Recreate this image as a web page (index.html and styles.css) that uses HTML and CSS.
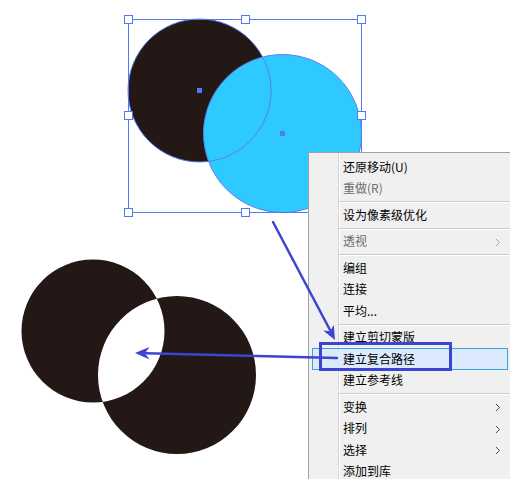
FILE: index.html
```html
<!DOCTYPE html>
<html lang="zh-CN">
<head>
<meta charset="utf-8">
<title>建立复合路径</title>
<link rel="stylesheet" href="styles.css">
</head>
<body>
<div class="stage">
  <svg class="canvas" width="510" height="479" viewBox="0 0 510 479">
    <!-- top: selected circles -->
    <circle cx="199.5" cy="90.5" r="71.5" fill="#231815"/>
    <circle cx="282.5" cy="133.5" r="79" fill="#2ec9ff"/>
    <circle cx="199.5" cy="90.5" r="71.5" fill="none" stroke="#5b7ef2" stroke-width="1"/>
    <circle cx="282.5" cy="133.5" r="79" fill="none" stroke="#5b7ef2" stroke-width="1"/>
    <rect x="128.5" y="19.5" width="233" height="193" fill="none" stroke="#4f7cf0" stroke-width="1"/>
    <g fill="#fff" stroke="#4f7cf0" stroke-width="1">
      <rect x="124.5" y="15.5" width="8" height="8"/>
      <rect x="241.5" y="15.5" width="8" height="8"/>
      <rect x="357.5" y="15.5" width="8" height="8"/>
      <rect x="124.5" y="111.5" width="8" height="8"/>
      <rect x="357.5" y="111.5" width="8" height="8"/>
      <rect x="124.5" y="208.5" width="8" height="8"/>
      <rect x="241.5" y="208.5" width="8" height="8"/>
      <rect x="357.5" y="208.5" width="8" height="8"/>
    </g>
    <rect x="197" y="88" width="5" height="5" fill="#4f7cf0"/>
    <rect x="280" y="131" width="5" height="5" fill="#4f7cf0"/>
    <!-- bottom: compound path result -->
    <path fill="#231815" fill-rule="evenodd"
      d="M21.5,331 a71.5,71.5 0 1,0 143,0 a71.5,71.5 0 1,0 -143,0 Z
         M98,375 a79,79 0 1,0 158,0 a79,79 0 1,0 -158,0 Z"/>
  </svg>

  <div class="menu">
    <div class="item">还原移动(U)</div>
    <div class="item disabled">重做(R)</div>
    <div class="sep"></div>
    <div class="item">设为像素级优化</div>
    <div class="sep"></div>
    <div class="item disabled has-sub">透视<svg class="chev" width="6" height="9" viewBox="0 0 6 9"><path d="M1 1 L4.5 4.5 L1 8" fill="none" stroke="currentColor" stroke-width="1"/></svg></div>
    <div class="sep"></div>
    <div class="item">编组</div>
    <div class="item">连接</div>
    <div class="item">平均...</div>
    <div class="sep"></div>
    <div class="item">建立剪切蒙版</div>
    <div class="item active">建立复合路径</div>
    <div class="item">建立参考线</div>
    <div class="sep"></div>
    <div class="item has-sub">变换<svg class="chev" width="6" height="9" viewBox="0 0 6 9"><path d="M1 1 L4.5 4.5 L1 8" fill="none" stroke="currentColor" stroke-width="1"/></svg></div>
    <div class="item has-sub">排列<svg class="chev" width="6" height="9" viewBox="0 0 6 9"><path d="M1 1 L4.5 4.5 L1 8" fill="none" stroke="currentColor" stroke-width="1"/></svg></div>
    <div class="item has-sub">选择<svg class="chev" width="6" height="9" viewBox="0 0 6 9"><path d="M1 1 L4.5 4.5 L1 8" fill="none" stroke="currentColor" stroke-width="1"/></svg></div>
    <div class="item">添加到库</div>
  </div>

  <svg class="overlay" width="510" height="479" viewBox="0 0 510 479">
    <g stroke="#3d44cf" fill="none" stroke-width="2.5" stroke-linecap="round">
      <line x1="273" y1="222" x2="330" y2="330"/>
      <line x1="337" y1="358" x2="146" y2="353.3"/>
    </g>
    <g fill="#3d44cf">
      <path d="M335,340 L323.2,330.4 L330.3,331.2 L333.8,324.8 Z"/>
      <path d="M135,353 L149.5,347 L145,353.2 L149.5,359.4 Z"/>
    </g>
    <rect x="320.5" y="343.5" width="130" height="26" fill="none" stroke="#3d44cf" stroke-width="3"/>
  </svg>
</div>
</body>
</html>
```

FILE: styles.css
```css
html, body {
  margin: 0;
  padding: 0;
  background: #ffffff;
}

.stage {
  position: relative;
  width: 510px;
  height: 479px;
  overflow: hidden;
  font-family: "Noto Sans CJK SC", "Microsoft YaHei", sans-serif;
}

.canvas {
  position: absolute;
  left: 0;
  top: 0;
  display: block;
}

.overlay {
  position: absolute;
  left: 0;
  top: 0;
  display: block;
  pointer-events: none;
}

.menu {
  position: absolute;
  left: 308px;
  top: 152px;
  width: 203px;
  box-sizing: border-box;
  border: 1px solid #a0a0a0;
  padding: 3px 0 3px 0;
  background:
    linear-gradient(to right,
      transparent 0, transparent 29px,
      #d4d4d4 29px, #d4d4d4 30px,
      #ffffff 30px, #ffffff 31px,
      transparent 31px) ,
    #f0f0f0;
  display: flex;
  flex-direction: column;
}

.item {
  position: relative;
  height: 21.5px;
  margin: 0 2px 0 3px;
  padding-left: 30px;
  box-sizing: border-box;
  border: 1px solid transparent;
  display: flex;
  align-items: center;
  font-size: 12px;
  line-height: 1;
  color: #000000;
  white-space: nowrap;
}

.item.disabled {
  color: #6d6d6d;
}

.item.active {
  background: #dbeafc;
  border-color: #3ba2e0;
}

.chev {
  position: absolute;
  right: 6px;
  top: 6px;
  color: #4a4a4a;
}

.item.disabled .chev {
  color: #a8a8a8;
}

.sep {
  height: 5px;
  margin-left: 30px;
  margin-right: 0;
  box-sizing: border-box;
  padding-top: 2px;
  display: flex;
  flex-direction: column;
}

.sep::before {
  content: "";
  display: block;
  height: 1px;
  background: #cccccc;
}

.sep::after {
  content: "";
  display: block;
  height: 1px;
  background: #ffffff;
}
```
